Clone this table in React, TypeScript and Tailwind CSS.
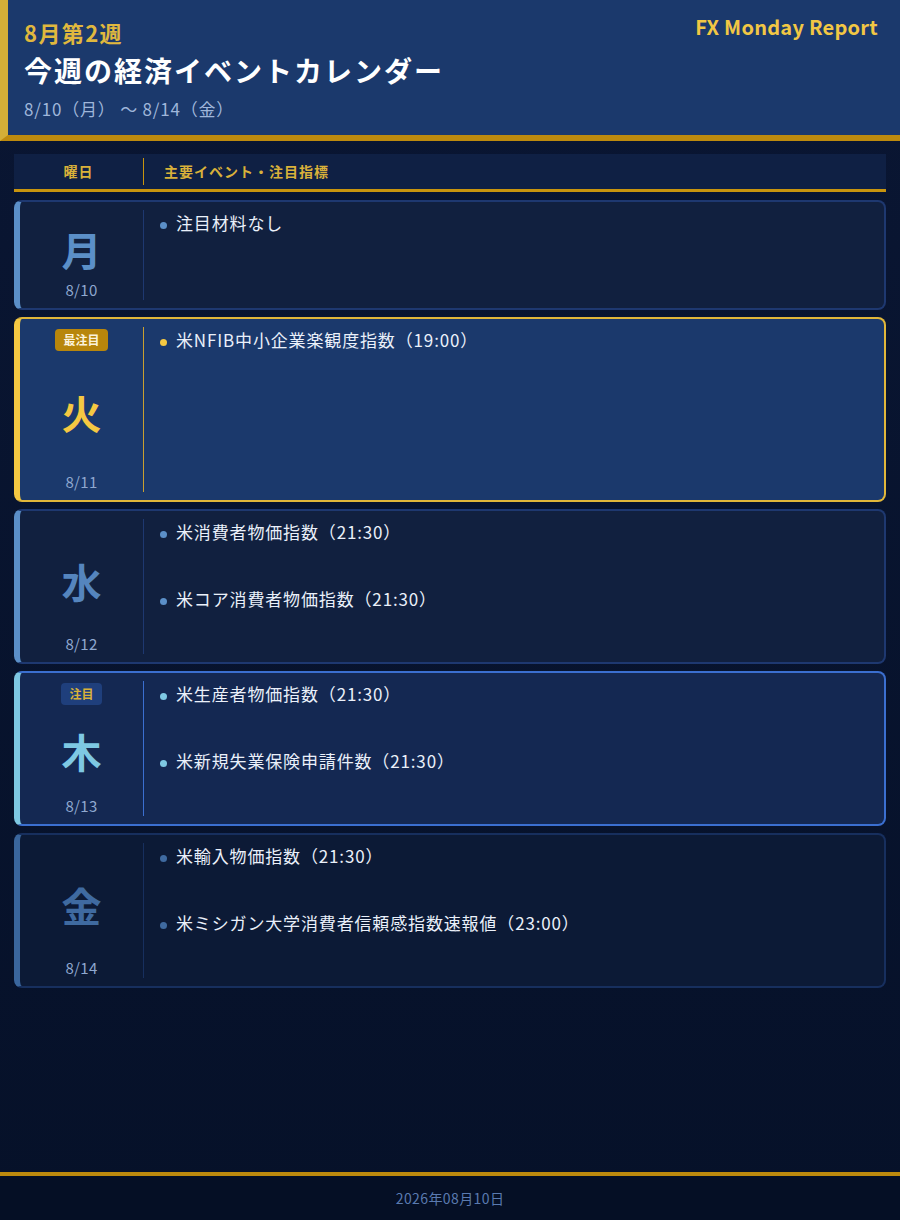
import React from 'react';

type Day = {
  day: string;
  date: string;
  badge?: 'top' | 'hot';
  events: string[];
  h: string;
  box: string;
  char: string;
  dot: string;
  divider: string;
};

const days: Day[] = [
  {
    day: '月',
    date: '8/10',
    events: ['注目材料なし'],
    h: 'h-[110px]',
    box: 'bg-[#11203f] border-[#1e3870] border-l-[#5b8fc8]',
    char: 'text-[#5b8fc8]',
    dot: 'bg-[#5b8fc8]',
    divider: 'border-[#1e3870]',
  },
  {
    day: '火',
    date: '8/11',
    badge: 'top',
    events: ['米NFIB中小企業楽観度指数（19:00）'],
    h: 'h-[185px]',
    box: 'bg-[#1b396c] border-[#e2b73a] border-l-[#f5c842]',
    char: 'text-[#f5c842]',
    dot: 'bg-[#f5c842]',
    divider: 'border-[#c9a030]',
  },
  {
    day: '水',
    date: '8/12',
    events: ['米消費者物価指数（21:30）', '米コア消費者物価指数（21:30）'],
    h: 'h-[155px]',
    box: 'bg-[#11203f] border-[#1e3870] border-l-[#5b8fc8]',
    char: 'text-[#5585be]',
    dot: 'bg-[#5b8fc8]',
    divider: 'border-[#1e3870]',
  },
  {
    day: '木',
    date: '8/13',
    badge: 'hot',
    events: ['米生産者物価指数（21:30）', '米新規失業保険申請件数（21:30）'],
    h: 'h-[155px]',
    box: 'bg-[#142852] border-[#3b6fd0] border-l-[#7ec8e3]',
    char: 'text-[#7ec8e3]',
    dot: 'bg-[#7ec8e3]',
    divider: 'border-[#3b6fd0]',
  },
  {
    day: '金',
    date: '8/14',
    events: ['米輸入物価指数（21:30）', '米ミシガン大学消費者信頼感指数速報値（23:00）'],
    h: 'h-[155px]',
    box: 'bg-[#0c1a36] border-[#172f5e] border-l-[#3a669d]',
    char: 'text-[#3f6aa0]',
    dot: 'bg-[#3f6aa0]',
    divider: 'border-[#172f5e]',
  },
];

const font = { fontFamily: '"Noto Sans CJK JP", "Noto Sans", sans-serif' };

const Row = ({ d }: { d: Day }) => (
  <div className={`flex rounded-lg border-2 border-l-[6px] ${d.box} ${d.h}`}>
    {/* 曜日 */}
    <div className={`w-[124px] shrink-0 my-2 border-r flex flex-col items-center ${d.divider}`}>
      {d.badge === 'top' && (
        <span className="mt-0.5 h-[22px] px-2 rounded bg-[#b8860b] text-[#fbf3dc] text-[12px] font-bold leading-[22px]">
          最注目
        </span>
      )}
      {d.badge === 'hot' && (
        <span className="mt-0.5 h-[22px] px-2 rounded bg-[#1f3f7c] text-[#d9b13a] text-[12px] font-bold leading-[22px]">
          注目
        </span>
      )}
      {!d.badge && <div className="h-2" />}
      <div className="flex-1 flex items-center">
        <span className={`text-[40px] font-bold leading-[48px] ${d.char}`}>{d.day}</span>
      </div>
      <span className="text-[15px] leading-[20px] tracking-[0.3px] text-[#8fa8d0]">{d.date}</span>
    </div>
    {/* イベント */}
    <div className="flex-1 pl-4 pt-2 flex flex-col gap-[41px]">
      {d.events.map((e) => (
        <div key={e} className="flex items-center gap-[9px]">
          <span className={`w-[7px] h-[7px] rounded-full mt-1 ${d.dot}`} />
          <span className="text-[17px] leading-[26px] tracking-[0.85px] text-[#eaf0fa]">{e}</span>
        </div>
      ))}
    </div>
  </div>
);

export default function App() {
  return (
    <div className="min-h-screen flex flex-col bg-gradient-to-b from-[#0a1633] to-[#061129]" style={font}>
      {/* ヘッダー */}
      <div className="bg-[#1b396c] border-l-8 border-l-[#d4af37] border-b-[6px] border-b-[#bd8a0e] flex justify-between pl-4 pr-[22px] pt-4 pb-[13px]">
        <div className="flex flex-col">
          <span className="text-[22px] font-bold leading-[32px] tracking-[1.4px] text-[#e0b83e]">8月第2週</span>
          <span className="mt-0.5 text-[28px] font-bold leading-[40px] tracking-[2px] text-white">今週の経済イベントカレンダー</span>
          <span className="mt-1.5 text-[17px] leading-[26px] tracking-[0.8px] text-[#9fb6da]">8/10（月） 〜 8/14（金）</span>
        </div>
        <span className="-mt-px text-[20px] font-bold leading-[24px] tracking-[0.25px] text-[#f2c744]">FX Monday Report</span>
      </div>

      {/* カレンダー */}
      <div className="flex-1 px-[14px] pt-[13px]">
        <div className="flex h-[38px] bg-[#0f2044] border-b-[3px] border-[#c8940e]">
          <div className="w-[130px] my-1 border-r border-[#c8940e] flex items-center justify-center text-[14px] font-bold tracking-[1px] text-[#d9b13a]">
            曜日
          </div>
          <div className="flex items-center pl-5 text-[14px] font-bold tracking-[1px] text-[#d9b13a]">主要イベント・注目指標</div>
        </div>
        <div className="mt-2 flex flex-col gap-[7px]">
          {days.map((d) => (
            <Row key={d.day} d={d} />
          ))}
        </div>
      </div>

      {/* フッター */}
      <div className="border-t-4 border-[#bd8a0e] bg-[#050f25] h-[48px] flex items-center justify-center">
        <span className="text-[14px] tracking-[0.4px] text-[#5a7ab0]">2026年08月10日</span>
      </div>
    </div>
  );
}
